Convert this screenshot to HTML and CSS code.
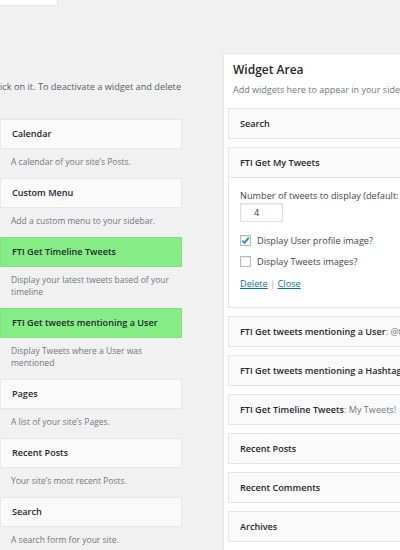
FILE: index.html
```
<!DOCTYPE html>
<html>
<head>
<meta charset="utf-8">
<link rel="stylesheet" href="styles.css">
</head>
<body>
<div class="topbar"><div class="search-box"></div></div>
<div class="main">
  <div class="left">
    <p class="intro">ick on it. To deactivate a widget and delete</p>
    <ul class="widgets">
      <li><div class="wtitle">Calendar</div><p class="wdesc">A calendar of your site’s Posts.</p></li>
      <li><div class="wtitle">Custom Menu</div><p class="wdesc">Add a custom menu to your sidebar.</p></li>
      <li><div class="wtitle green">FTI Get Timeline Tweets</div><p class="wdesc">Display your latest tweets based of your<br>timeline</p></li>
      <li><div class="wtitle green">FTI Get tweets mentioning a User</div><p class="wdesc">Display Tweets where a User was<br>mentioned</p></li>
      <li><div class="wtitle">Pages</div><p class="wdesc">A list of your site’s Pages.</p></li>
      <li><div class="wtitle">Recent Posts</div><p class="wdesc">Your site’s most recent Posts.</p></li>
      <li><div class="wtitle">Search</div><p class="wdesc">A search form for your site.</p></li>
    </ul>
  </div>
  <div class="right">
    <div class="panel">
      <h2 class="panel-title">Widget Area</h2>
      <p class="panel-desc">Add widgets here to appear in your sidebar.</p>
      <div class="rw"><div class="rhead">Search</div></div>
      <div class="rw open">
        <div class="rhead">FTI Get My Tweets</div>
        <div class="rbody">
          <div class="field-label">Number of tweets to display (default: 5):</div>
          <div class="num-input">4</div>
          <div class="check-row first">
            <span class="checkbox"><svg viewBox="0 0 11 11" width="11" height="11"><path d="M2.3 5.6 L4.5 7.8 L8.8 2.6" fill="none" stroke="#1e8cbe" stroke-width="1.8"/></svg></span>
            <span class="check-label">Display User profile image?</span>
          </div>
          <div class="check-row">
            <span class="checkbox"></span>
            <span class="check-label">Display Tweets images?</span>
          </div>
          <div class="actions"><a class="link">Delete</a> <span class="sep">|</span> <a class="link">Close</a></div>
        </div>
      </div>
      <div class="rw"><div class="rhead">FTI Get tweets mentioning a User<span class="in-title">: @twitter</span></div></div>
      <div class="rw"><div class="rhead">FTI Get tweets mentioning a Hashtag<span class="in-title">: #wordpress</span></div></div>
      <div class="rw"><div class="rhead">FTI Get Timeline Tweets<span class="in-title">: My Tweets!</span></div></div>
      <div class="rw"><div class="rhead">Recent Posts</div></div>
      <div class="rw"><div class="rhead">Recent Comments</div></div>
      <div class="rw"><div class="rhead">Archives</div></div>
    </div>
  </div>
</div>
</body>
</html>
```
FILE: styles.css
```
html, body {
  margin: 0;
  height: 100%;
  overflow: hidden;
}
body {
  background: #f1f1f1;
  font-family: "Open Sans", "Liberation Sans", sans-serif;
  font-size: 8.5px;
  color: #444;
}
.topbar {
  height: 6px;
}
.search-box {
  width: 57px;
  height: 5px;
  background: #fff;
  border-right: 1px solid #e2e2e2;
  border-bottom: 1px solid #e2e2e2;
}
.main {
  display: flex;
  align-items: flex-start;
}
.left {
  width: 182px;
  flex: none;
  padding-top: 75px;
}
.intro {
  margin: 0 0 26px;
  font-size: 9.2px;
  line-height: 12px;
  color: #555d66;
  white-space: nowrap;
}
.widgets {
  margin: 0;
  padding: 0;
  list-style: none;
}
.wtitle {
  height: 30px;
  box-sizing: border-box;
  border: 1px solid #e8e8e8;
  background: #fafafa;
  padding: 0 11px;
  line-height: 28px;
  font-size: 9.1px;
  font-weight: 600;
  color: #23282d;
  white-space: nowrap;
}
.wtitle.green {
  background: #86ec86;
  border-color: #80e080;
}
.wdesc {
  margin: 0;
  padding: 7px 11px 10px;
  line-height: 12px;
  color: #72777c;
}
.right {
  margin-left: 41px;
  margin-top: 47px;
  flex: none;
}
.panel {
  width: 270px;
  background: #fff;
  border: 1px solid #e5e5e5;
  padding: 0 0 10px 4px;
}
.panel-title {
  margin: 0;
  padding: 8px 0 0 5px;
  font-size: 12px;
  font-weight: 600;
  line-height: 16px;
  color: #23282d;
}
.panel-desc {
  margin: 6px 0 12px 5px;
  font-size: 9px;
  line-height: 12px;
  color: #72777c;
  white-space: nowrap;
}
.rw {
  margin-bottom: 8px;
  border: 1px solid #e5e5e5;
  background: #fafafa;
}
.rhead {
  height: 29px;
  line-height: 29px;
  padding: 0 11px;
  font-size: 9.1px;
  font-weight: 600;
  color: #23282d;
  white-space: nowrap;
}
.in-title {
  font-weight: 400;
  color: #72777c;
}
.rw.open .rhead {
  border-bottom: 1px solid #e5e5e5;
}
.rbody {
  background: #fff;
  padding: 12px 11px 17px;
  font-size: 9.2px;
}
.field-label {
  line-height: 12px;
  white-space: nowrap;
  color: #444;
}
.num-input {
  margin-top: 1px;
  width: 43px;
  height: 19px;
  box-sizing: border-box;
  border: 1px solid #ddd;
  box-shadow: inset 0 1px 2px rgba(0,0,0,0.07);
  padding-left: 13px;
  line-height: 17px;
  color: #32373c;
}
.check-row {
  display: flex;
  align-items: center;
  height: 11px;
  margin-top: 10px;
}
.check-row.first {
  margin-top: 13px;
}
.checkbox {
  width: 11px;
  height: 11px;
  box-sizing: border-box;
  border: 1px solid #b4b9be;
  background: #fff;
  box-shadow: inset 0 1px 2px rgba(0,0,0,0.1);
  display: flex;
  flex: none;
}
.checkbox svg {
  margin: -1px;
}
.check-label {
  margin-left: 6px;
  color: #444;
}
.actions {
  margin-top: 11px;
  line-height: 12px;
}
.link {
  color: #0073aa;
  text-decoration: underline;
}
.sep {
  color: #a0a5aa;
}
```
